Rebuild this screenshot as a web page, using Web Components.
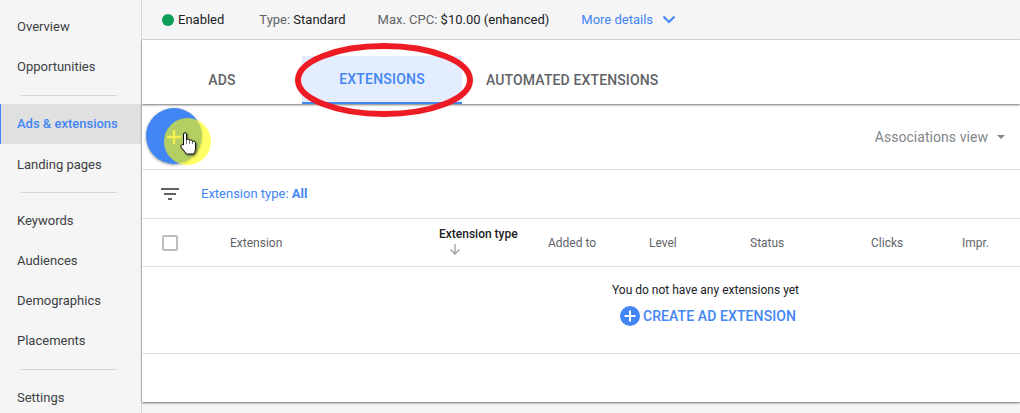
<!DOCTYPE html>
<html>
<head>
<meta charset="utf-8">
<title>Ad extensions</title>
<style>
  html, body { margin: 0; height: 413px; overflow: hidden; background: #f5f5f5; font-family: Roboto, sans-serif; }
  body { display: flex; }
</style>
</head>
<body>
<side-nav>
  <nav-item>Overview</nav-item>
  <nav-item>Opportunities</nav-item>
  <nav-rule></nav-rule>
  <nav-item active>Ads &amp; extensions</nav-item>
  <nav-item>Landing pages</nav-item>
  <nav-rule tight></nav-rule>
  <nav-item>Keywords</nav-item>
  <nav-item>Audiences</nav-item>
  <nav-item>Demographics</nav-item>
  <nav-item>Placements</nav-item>
  <nav-rule last></nav-rule>
  <nav-item>Settings</nav-item>
</side-nav>
<main-panel>
  <info-bar></info-bar>
  <tab-bar></tab-bar>
  <ext-card></ext-card>
</main-panel>

<script>
class SideNav extends HTMLElement {
  constructor() {
    super();
    this.attachShadow({mode: "open"}).innerHTML = `
    <style>
      :host { display: flex; flex-direction: column; flex: none; width: 142px; height: 413px; padding-top: 6px; box-sizing: border-box; border-right: 1px solid #d6d6d6; overflow: hidden; }
    </style>
    <slot></slot>`;
  }
}

class NavItem extends HTMLElement {
  constructor() {
    super();
    this.attachShadow({mode: "open"}).innerHTML = `
    <style>
      :host { display: flex; align-items: center; flex: none; height: 40px; padding-left: 17px; font-size: 13px; color: #3c4043; }
      :host([active]) { background: #e0e0e0; color: #4285f4; font-weight: 500; height: 38px; padding: 0 0 2px 16px; border-left: 1px solid #4285f4; }
    </style>
    <slot></slot>`;
  }
}

class NavRule extends HTMLElement {
  constructor() {
    super();
    this.attachShadow({mode: "open"}).innerHTML = `
    <style>
      :host { display: block; flex: none; height: 1px; margin: 9px 24px 8px 21px; background: #d6d6d6; }
      :host([tight]) { margin-top: 8px; margin-bottom: 7px; }
      :host([last]) { margin-bottom: 7px; }
    </style>`;
  }
}

class MainPanel extends HTMLElement {
  constructor() {
    super();
    this.attachShadow({mode: "open"}).innerHTML = `
    <style>
      :host { display: flex; flex-direction: column; flex: 1; min-width: 0; position: relative; }
    </style>
    <slot></slot>`;
  }
}

class InfoBar extends HTMLElement {
  constructor() {
    super();
    this.attachShadow({mode: "open"}).innerHTML = `
    <style>
      :host { display: flex; align-items: center; height: 39px; padding: 0 0 0 20px; border-bottom: 1px solid #dadada; font-size: 13px; color: #202124; }
      .dot { width: 12px; height: 12px; border-radius: 50%; background: #0f9d58; margin-right: 4px; }
      .lbl { color: #5f6368; }
      .type { margin-left: 35px; }
      .cpc { margin-left: 32px; }
      .more { margin-left: 32px; color: #4285f4; }
      svg { margin-left: 9px; }
    </style>
    <span class="dot"></span><span>Enabled</span>
    <span class="type"><span class="lbl">Type:</span> Standard</span>
    <span class="cpc"><span class="lbl">Max. CPC:</span> $10.00 (enhanced)</span>
    <span class="more">More details</span>
    <svg width="14" height="9" viewBox="0 0 14 9"><path d="M1.5 1.500 7 7l5.500-5.500" fill="none" stroke="#4285f4" stroke-width="2"/></svg>`;
  }
}

class TabBar extends HTMLElement {
  constructor() {
    super();
    this.attachShadow({mode: "open"}).innerHTML = `
    <style>
      :host { display: flex; align-items: flex-end; height: 64px; background: #fff; font-size: 14px; font-weight: 500; color: #5f6368; position: relative; z-index: 1; box-shadow: 0 1px 2px rgba(0,0,0,.55); letter-spacing: .13px; }
      div { display: flex; align-items: center; justify-content: center; height: 48px; box-sizing: border-box; }
      .ads { width: 160px; }
      .on { width: 160px; background: #e3edfd; color: #4285f4; border-bottom: 2px solid #4285f4; letter-spacing: .2px; }
      .auto { padding: 0 24px; }
      svg { position: absolute; left: 153px; top: 3px; }
    </style>
    <div class="ads">ADS</div>
    <div class="on">EXTENSIONS</div>
    <div class="auto">AUTOMATED EXTENSIONS</div>
    <svg width="180" height="76" viewBox="0 0 180 76"><ellipse cx="89" cy="37" rx="86" ry="34" fill="none" stroke="#ed1c24" stroke-width="6"/></svg>`;
  }
}

class ExtCard extends HTMLElement {
  constructor() {
    super();
    this.attachShadow({mode: "open"}).innerHTML = `
    <style>
      :host { display: block; height: 298px; background: #fff; box-shadow: 0 1px 2px rgba(0,0,0,.55); font-size: 12px; color: #5f6368; position: relative; }
      .tool { display: flex; align-items: center; justify-content: flex-end; height: 65px; padding-right: 15px; border-bottom: 1px solid #e0e0e0; font-size: 14px; color: #80868b; letter-spacing: .05px; }
      .tool svg { margin-left: 9px; }
      .filter { display: flex; align-items: center; height: 48px; padding-left: 19px; border-bottom: 1px solid #e0e0e0; color: #4285f4; font-size: 13px; }
      .filter svg { margin-right: 22px; }
      .filter span { margin-bottom: 2px; }
      .filter b { font-weight: 700; }
      .head { display: grid; grid-template-columns: 68px 209px 109px 101px 101px 121px 91px 1fr; align-items: center; height: 47px; padding-left: 20px; border-bottom: 1px solid #e0e0e0; }
      .box { width: 12px; height: 12px; border: 2px solid #bdbdbd; border-radius: 2px; }
      .sort { color: #202124; font-weight: 500; display: flex; flex-direction: column; align-items: flex-start; margin-bottom: 4px; }
      .sort svg { margin: 2px 0 0 10px; }
      .empty { display: flex; flex-direction: column; align-items: center; height: 87px; border-bottom: 1px solid #e0e0e0; padding: 16px 0 0 249px; box-sizing: border-box; color: #202124; }
      .cta { display: flex; align-items: center; gap: 3px; margin: 9px 0 0 5px; color: #4285f4; font-size: 14px; font-weight: 500; letter-spacing: .1px; }
      .fab { position: absolute; left: 4px; top: 4px; width: 56px; height: 56px; border-radius: 50%; background: #4285f4; box-shadow: 0 1px 3px rgba(0,0,0,.4); }
      .spot { position: absolute; left: 22px; top: 14px; width: 47px; height: 47px; border-radius: 50%; background: rgba(255,255,0,.6); }
      .plus { position: absolute; left: 25px; top: 26px; }
      .hand { position: absolute; left: 38px; top: 28px; filter: drop-shadow(1px 1px 1px rgba(0,0,0,.5)); }
    </style>
    <div class="tool">Associations view<svg width="8" height="4" viewBox="0 0 8 4"><path d="M0 0h8L4 4z" fill="#80868b"/></svg></div>
    <div class="filter">
      <svg width="18" height="12" viewBox="0 0 18 12"><path d="M0 0h18v2H0zM3 5h12v2H3zM7 10h4v2H7z" fill="#5f6368"/></svg>
      <span>Extension type: <b>All</b></span>
    </div>
    <div class="head">
      <span class="box"></span>
      <span>Extension</span>
      <span class="sort">Extension type<svg width="12" height="12" viewBox="0 0 12 12"><path d="M6 1v10M1.500 6.500 6 11l4.500-4.500" fill="none" stroke="#9e9e9e" stroke-width="1.300"/></svg></span>
      <span>Added to</span><span>Level</span><span>Status</span><span>Clicks</span><span>Impr.</span>
    </div>
    <div class="empty">
      <span>You do not have any extensions yet</span>
      <span class="cta">
        <svg width="20" height="20" viewBox="0 0 20 20"><circle cx="10" cy="10" r="10" fill="#4285f4"/><path d="M10 4.500v11M4.500 10h11" stroke="#fff" stroke-width="2"/></svg>
        CREATE AD EXTENSION
      </span>
    </div>
    <div class="fab"></div>
    <div class="spot"></div>
    <svg class="plus" width="14" height="14" viewBox="0 0 14 14"><path d="M7 0v14M0 7h14" stroke="#f2f250" stroke-width="2.400"/></svg>
    <svg class="hand" width="18" height="23" viewBox="0 0 18 23"><path d="M3.500 13V2C3.500.3 6.500.3 6.500 2V8C7 7 9.500 7 9.500 8.500 10 7.500 12.500 7.800 12.500 9.500 13 8.800 15.500 9 15.500 11V16C15.500 19 14.500 20 14 22H6.500L1 15C0 13.500 1.800 11.800 3.500 13Z" fill="#fff" stroke="#111" stroke-width="1"/><path d="M6.500 8v4M9.500 8.500V12M12.500 9.500V12" fill="none" stroke="#555" stroke-width=".8"/></svg>`;
  }
}

customElements.define("side-nav", SideNav);
customElements.define("nav-item", NavItem);
customElements.define("nav-rule", NavRule);
customElements.define("main-panel", MainPanel);
customElements.define("info-bar", InfoBar);
customElements.define("tab-bar", TabBar);
customElements.define("ext-card", ExtCard);
</script>
</body>
</html>
